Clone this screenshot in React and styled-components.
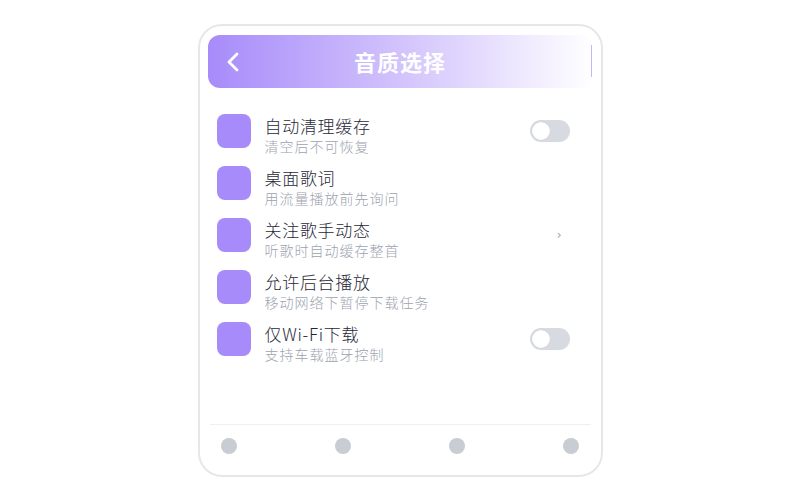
import React from "react";
import styled, { createGlobalStyle } from "styled-components";

const GlobalStyle = createGlobalStyle`
    html, body {
        margin: 0;
        padding: 0;
        background: #ffffff;
    }

    body {
        font-family: "Noto Sans CJK SC", "Noto Sans", sans-serif;
    }
`;

const items = [
    { title: "自动清理缓存", desc: "清空后不可恢复", action: "toggle" },
    { title: "桌面歌词", desc: "用流量播放前先询问" },
    { title: "关注歌手动态", desc: "听歌时自动缓存整首", action: "chevron" },
    { title: "允许后台播放", desc: "移动网络下暂停下载任务" },
    { title: "仅Wi-Fi下载", desc: "支持车载蓝牙控制", action: "toggle" }
];

const Page = styled.div`
    align-items: center;
    display: flex;
    height: 500px;
    justify-content: center;
    width: 800px;
`;

const Phone = styled.div`
    background: #ffffff;
    border: 2px solid #e5e7eb;
    border-radius: 24px;
    box-sizing: border-box;
    display: flex;
    flex-direction: column;
    height: 453px;
    padding: 9px 8px 0;
    width: 405px;
`;

const Header = styled.div`
    align-items: center;
    background: linear-gradient(90deg, #a78bfa 0%, #d2c3fc 50%, #ffffff 100%);
    border-radius: 12px;
    display: flex;
    height: 53px;
    justify-content: center;
    position: relative;

    &::after {
        background: #c4b5fd;
        content: "";
        height: 32px;
        position: absolute;
        right: 1px;
        top: 10px;
        width: 1px;
    }
`;

const BackButton = styled.span`
    display: flex;
    left: 18px;
    position: absolute;
    top: 17px;
`;

const Title = styled.h1`
    color: #ffffff;
    font-size: 22px;
    font-weight: 700;
    letter-spacing: 1px;
    margin: 0;
`;

const List = styled.div`
    display: flex;
    flex: 1;
    flex-direction: column;
    padding: 17px 0 0 1px;
`;

const Row = styled.div`
    align-items: flex-start;
    display: flex;
    height: 34px;
    padding: 9px 23px 9px 8px;
`;

const Square = styled.div`
    background: #a78bfa;
    border-radius: 8px;
    flex-shrink: 0;
    height: 34px;
    width: 34px;
`;

const Text = styled.div`
    display: flex;
    flex: 1;
    flex-direction: column;
    margin-left: 14px;
    padding-top: 1px;
    white-space: nowrap;
`;

const RowTitle = styled.span`
    color: #1f2937;
    font-size: 17px;
    font-weight: 300;
    letter-spacing: 0.7px;
    line-height: 22px;
`;

const RowDesc = styled.span`
    color: #9ca3af;
    font-size: 14px;
    font-weight: 300;
    letter-spacing: 1px;
    line-height: 18px;
`;

const Toggle = styled.div`
    align-self: center;
    background: #d7dae0;
    border-radius: 11px;
    box-sizing: border-box;
    height: 22px;
    padding: 2px;
    width: 40px;

    &::before {
        background: #ffffff;
        border-radius: 50%;
        box-shadow: 0 0 1px rgba(0, 0, 0, 0.15);
        content: "";
        display: block;
        height: 18px;
        width: 18px;
    }
`;

const Chevron = styled.span`
    align-self: center;
    color: #9ca3af;
    font-family: "DejaVu Sans", sans-serif;
    font-size: 12px;
    margin-right: 8px;
`;

const Footer = styled.div`
    align-items: center;
    border-top: 1px solid #eeeff2;
    display: flex;
    height: 42px;
    justify-content: space-between;
    margin: 0 2px 8px;
    padding: 0 11px;
`;

const Dot = styled.span`
    background: #c8ccd3;
    border-radius: 50%;
    height: 16px;
    width: 16px;
`;

const SettingRow = ({ title, desc, action }) => (
    <Row>
        <Square />
        <Text>
            <RowTitle>{title}</RowTitle>
            <RowDesc>{desc}</RowDesc>
        </Text>
        {action === "toggle" && <Toggle />}
        {action === "chevron" && <Chevron>›</Chevron>}
    </Row>
);

const App = () => (
    <Page>
        <GlobalStyle />
        <Phone>
            <Header>
                <BackButton>
                    <svg width="14" height="20" viewBox="0 0 14 20">
                        <polyline
                            points="11,2 3,10 11,18"
                            fill="none"
                            stroke="#ffffff"
                            strokeWidth="2.8"
                            strokeLinecap="round"
                            strokeLinejoin="round"
                        />
                    </svg>
                </BackButton>
                <Title>音质选择</Title>
            </Header>
            <List>
                {items.map(item => (
                    <SettingRow key={item.title} {...item} />
                ))}
            </List>
            <Footer>
                <Dot />
                <Dot />
                <Dot />
                <Dot />
            </Footer>
        </Phone>
    </Page>
);

export default App;
